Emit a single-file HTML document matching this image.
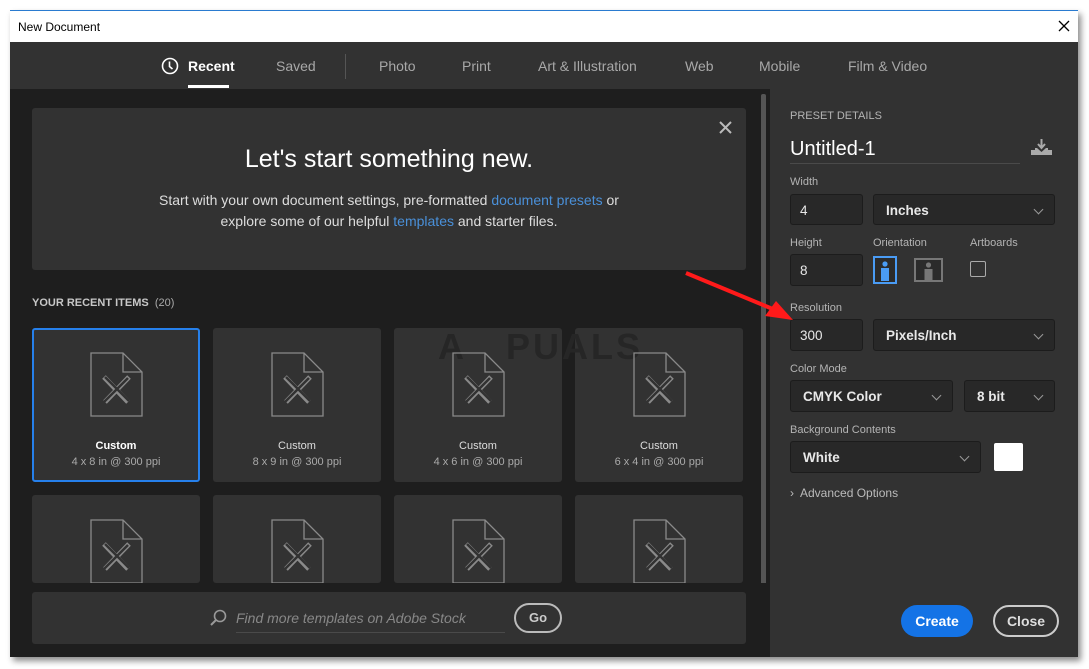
<!DOCTYPE html>
<html><head><meta charset="utf-8"><style>
*{box-sizing:border-box;margin:0;padding:0}
body{width:1089px;height:669px;background:#fff;font-family:"Liberation Sans",sans-serif;position:relative;overflow:hidden}
.a{position:absolute}
.win{left:10px;top:10px;width:1068px;height:647px;background:#1e1e1e;box-shadow:3px 4px 6px rgba(0,0,0,.45);border-top:1px solid #2a7bd0}
.title{left:10px;top:11px;width:1068px;height:31px;background:#fff;font-size:12px;color:#000;padding:9px 0 0 8px}
.tabs{left:10px;top:42px;width:1068px;height:47px;background:#323232}
.tab{top:58px;font-size:14px;color:#a8a8a8}
.card{background:#323232;border-radius:3px}
.lbl{font-size:11px;color:#b4b4b4}
.inp{background:#282828;border:1px solid #1c1c1c;border-radius:3px;color:#e8e8e8;font-size:13.5px;padding:8px 0 0 9px}
.dd{font-weight:bold;padding-left:12px}
.chev{position:absolute;right:12px;top:11px;width:7px;height:7px;border-right:1.5px solid #999;border-bottom:1.5px solid #999;transform:rotate(45deg)}
.ct{font-size:11px;color:#fff;text-align:center;width:100%;font-weight:bold}
.cs{font-size:11px;color:#aaa;text-align:center;width:100%}
</style></head><body>
<div class="a win"></div>
<div class="a title">New Document</div>
<svg class="a" style="left:1058px;top:20px" width="12" height="12"><path d="M1 1L11 11M11 1L1 11" stroke="#000" stroke-width="1.3"/></svg>
<div class="a tabs"></div>
<svg class="a" style="left:161px;top:57px" width="18" height="18"><circle cx="9" cy="9" r="7.5" fill="none" stroke="#fff" stroke-width="1.6"/><path d="M8.5 4.5V9.5L11.5 12" fill="none" stroke="#fff" stroke-width="1.6"/></svg>
<div class="a tab" style="left:188px;color:#fff;font-weight:bold">Recent</div>
<div class="a" style="left:188px;top:85px;width:41px;height:3px;background:#fff"></div>
<div class="a tab" style="left:276px">Saved</div>
<div class="a" style="left:345px;top:54px;width:1px;height:25px;background:#555"></div>
<div class="a tab" style="left:379px">Photo</div>
<div class="a tab" style="left:462px">Print</div>
<div class="a tab" style="left:538px">Art &amp; Illustration</div>
<div class="a tab" style="left:685px">Web</div>
<div class="a tab" style="left:759px">Mobile</div>
<div class="a tab" style="left:848px">Film &amp; Video</div>

<div class="a card" style="left:32px;top:108px;width:714px;height:162px"></div>
<svg class="a" style="left:719px;top:121px" width="13" height="13"><path d="M1 1L12 12M12 1L1 12" stroke="#bbb" stroke-width="2"/></svg>
<div class="a" style="left:32px;top:145px;width:714px;text-align:center;font-size:25px;color:#fff">Let's start something new.</div>
<div class="a" style="left:32px;top:190px;width:714px;text-align:center;font-size:14px;color:#ddd;line-height:21px">Start with your own document settings, pre-formatted <span style="color:#4a90d9">document presets</span> or<br>explore some of our helpful <span style="color:#4a90d9">templates</span> and starter files.</div>
<div class="a" style="left:761px;top:94px;width:5px;height:495px;background:#555;border-radius:2px"></div>

<div class="a" style="left:32px;top:297px;font-size:11px;color:#c8c8c8;font-weight:bold">YOUR RECENT ITEMS <span style="font-weight:normal;color:#aaa">&nbsp;(20)</span></div>

<div class="a card" style="left:32px;top:328px;width:168px;height:154px;border:2px solid #2680eb"></div>
<div class="a card" style="left:213px;top:328px;width:168px;height:154px"></div>
<div class="a card" style="left:394px;top:328px;width:168px;height:154px"></div>
<div class="a card" style="left:575px;top:328px;width:168px;height:154px"></div>
<div class="a card" style="left:32px;top:495px;width:168px;height:88px"></div>
<div class="a card" style="left:213px;top:495px;width:168px;height:88px"></div>
<div class="a card" style="left:394px;top:495px;width:168px;height:88px"></div>
<div class="a card" style="left:575px;top:495px;width:168px;height:88px"></div>

<div class="a" style="left:438px;top:326px;font-size:36px;font-weight:bold;color:#262626;letter-spacing:3px">A&nbsp;&nbsp;&nbsp;PUALS</div>

<svg class="a" style="left:0;top:0" width="770" height="590">
<defs><g id="doc"><path d="M0 0H32L51 19V63H0Z M32 0V19H51" fill="none" stroke="#8a8a8a" stroke-width="1.3"/>
<path d="M13 24L37 49M38 24L14 49" stroke="#8a8a8a" stroke-width="5" fill="none"/><path d="M14 24L38 48M37 25L13 49" stroke="#323232" stroke-width="2.5" fill="none"/></g></defs>
<use href="#doc" x="91" y="353"/><use href="#doc" x="272" y="353"/><use href="#doc" x="453" y="353"/><use href="#doc" x="634" y="353"/>
<use href="#doc" x="91" y="520"/><use href="#doc" x="272" y="520"/><use href="#doc" x="453" y="520"/><use href="#doc" x="634" y="520"/>
</svg>
<div class="a" style="left:32px;top:440px;width:168px"><div class="ct">Custom</div><div class="cs" style="margin-top:4px">4 x 8 in @ 300 ppi</div></div>
<div class="a" style="left:213px;top:440px;width:168px"><div class="ct" style="font-weight:normal;color:#ddd">Custom</div><div class="cs" style="margin-top:4px">8 x 9 in @ 300 ppi</div></div>
<div class="a" style="left:394px;top:440px;width:168px"><div class="ct" style="font-weight:normal;color:#ddd">Custom</div><div class="cs" style="margin-top:4px">4 x 6 in @ 300 ppi</div></div>
<div class="a" style="left:575px;top:440px;width:168px"><div class="ct" style="font-weight:normal;color:#ddd">Custom</div><div class="cs" style="margin-top:4px">6 x 4 in @ 300 ppi</div></div>

<div class="a" style="left:10px;top:583px;width:760px;height:74px;background:#1e1e1e"></div>
<div class="a card" style="left:32px;top:592px;width:714px;height:52px"></div>
<svg class="a" style="left:209px;top:609px" width="18" height="18"><circle cx="11" cy="7" r="5.5" fill="none" stroke="#999" stroke-width="1.6"/><path d="M7 11L2 16" stroke="#999" stroke-width="2"/></svg>
<div class="a" style="left:236px;top:610px;font-size:14px;color:#888;font-style:italic">Find more templates on Adobe Stock</div>
<div class="a" style="left:236px;top:632px;width:269px;height:1px;background:#4a4a4a"></div>
<div class="a" style="left:514px;top:603px;width:48px;height:30px;border:2px solid #bbb;border-radius:15px;color:#ccc;font-size:13px;font-weight:bold;text-align:center;padding-top:5px">Go</div>

<div class="a" style="left:770px;top:89px;width:308px;height:568px;background:#323232"></div>
<div class="a lbl" style="left:790px;top:110px">PRESET DETAILS</div>
<div class="a" style="left:790px;top:138px;font-size:20px;color:#fff">Untitled-1</div>
<div class="a" style="left:790px;top:163px;width:230px;height:1px;background:#4a4a4a"></div>
<svg class="a" style="left:1030px;top:138px" width="23" height="18"><path d="M11.5 1V9M8 6L11.5 10L15 6" stroke="#aaa" stroke-width="2" fill="none"/><path d="M1 12H5V10H7L11.5 14L16 10H18V12H22V17H1Z" fill="#aaa"/></svg>

<div class="a lbl" style="left:790px;top:176px">Width</div>
<div class="a inp" style="left:790px;top:194px;width:73px;height:31px">4</div>
<div class="a inp dd" style="left:873px;top:194px;width:182px;height:31px">Inches<span class="chev"></span></div>
<div class="a lbl" style="left:790px;top:237px">Height</div>
<div class="a lbl" style="left:873px;top:237px">Orientation</div>
<div class="a lbl" style="left:970px;top:237px">Artboards</div>
<div class="a inp" style="left:790px;top:254px;width:73px;height:32px">8</div>
<svg class="a" style="left:873px;top:256px" width="75" height="28">
<rect x="1" y="1" width="22" height="26" fill="#2b2b2b" stroke="#4a9cf5" stroke-width="2"/><circle cx="12" cy="8" r="2.6" fill="#4a9cf5"/><path d="M8 12H16V25H8Z" fill="#4a9cf5"/>
<rect x="42" y="3" width="27" height="22" fill="#2b2b2b" stroke="#777" stroke-width="2"/><circle cx="55.5" cy="9" r="2.6" fill="#777"/><path d="M51.5 13H59.5V24H51.5Z" fill="#777"/>
</svg>
<div class="a" style="left:970px;top:261px;width:16px;height:16px;border:1.5px solid #aaa;border-radius:2px"></div>

<div class="a lbl" style="left:790px;top:302px">Resolution</div>
<div class="a inp" style="left:790px;top:319px;width:73px;height:32px">300</div>
<div class="a inp dd" style="left:873px;top:319px;width:182px;height:32px">Pixels/Inch<span class="chev"></span></div>
<div class="a lbl" style="left:790px;top:363px">Color Mode</div>
<div class="a inp dd" style="left:790px;top:380px;width:163px;height:32px">CMYK Color<span class="chev"></span></div>
<div class="a inp dd" style="left:964px;top:380px;width:91px;height:32px">8 bit<span class="chev"></span></div>
<div class="a lbl" style="left:790px;top:424px">Background Contents</div>
<div class="a inp dd" style="left:790px;top:441px;width:191px;height:32px">White<span class="chev"></span></div>
<div class="a" style="left:994px;top:443px;width:29px;height:28px;background:#fff;border-radius:2px"></div>
<div class="a" style="left:790px;top:486px;font-size:12px;color:#bbb">›&nbsp; Advanced Options</div>

<div class="a" style="left:901px;top:605px;width:72px;height:32px;background:#1473e6;border-radius:16px;color:#fff;font-size:14px;font-weight:bold;text-align:center;padding-top:8px">Create</div>
<div class="a" style="left:993px;top:605px;width:66px;height:32px;border:2px solid #ccc;border-radius:16px;color:#ddd;font-size:14px;font-weight:bold;text-align:center;padding-top:6px">Close</div>

<svg class="a" style="left:680px;top:268px" width="120" height="60"><path d="M6 5L100 44" stroke="#ff1a1a" stroke-width="4"/><path d="M113 52L85 48L96 33Z" fill="#ff1a1a"/></svg>
</body></html>
